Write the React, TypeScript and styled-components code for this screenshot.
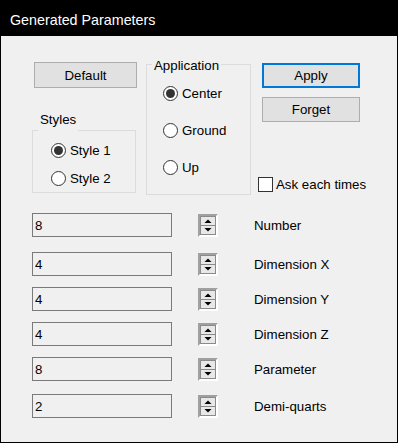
import React from 'react';
import styled, { createGlobalStyle } from 'styled-components';

const GlobalStyle = createGlobalStyle`
  html, body {
    margin: 0;
    padding: 0;
    background: #f0f0f0;
  }
  * {
    box-sizing: border-box;
  }
`;

const Window = styled.div`
  width: 398px;
  height: 443px;
  display: flex;
  flex-direction: column;
  font-family: "Liberation Sans", Arial, sans-serif;
  font-size: 13.3px;
  color: #000;
  overflow: hidden;
`;

const TitleBar = styled.div`
  height: 36px;
  flex: none;
  background: #000;
  color: #fff;
  font-size: 14.3px;
  line-height: 40px;
  padding-left: 10px;
  overflow: hidden;
`;

const Body = styled.div`
  flex: 1;
  background: #f0f0f0;
  border: 1px solid #000;
  border-top: none;
  padding-left: 31px;
`;

const TopArea = styled.div`
  display: flex;
  align-items: flex-start;
  height: 158px;
`;

const Column = styled.div<{ $w: number; $ml?: number }>`
  width: ${p => p.$w}px;
  margin-left: ${p => p.$ml ?? 0}px;
  display: flex;
  flex-direction: column;
`;

const Button = styled.button<{ $primary?: boolean; $mt: number }>`
  width: 98px;
  height: 25px;
  margin-top: ${p => p.$mt}px;
  margin-left: 4px;
  padding: 0;
  background: #e1e1e1;
  border: ${p => (p.$primary ? '2px solid #0078d7' : '1px solid #adadad')};
  font-family: inherit;
  font-size: 13.3px;
  font-weight: normal;
  color: #000;
`;

const WideButton = styled(Button)`
  width: 103px;
  height: 26px;
  margin-left: 2px;
`;

const Group = styled.div<{ $w: number; $h: number; $mt: number; $pt: number; $pl: number; $gap: number }>`
  position: relative;
  width: ${p => p.$w}px;
  height: ${p => p.$h}px;
  margin-top: ${p => p.$mt}px;
  border: 1px solid #dcdcdc;
  padding: ${p => p.$pt}px 0 0 ${p => p.$pl}px;
  display: flex;
  flex-direction: column;
  gap: ${p => p.$gap}px;
`;

const Legend = styled.span<{ $top: number; $left: number }>`
  position: absolute;
  top: ${p => p.$top}px;
  left: ${p => p.$left}px;
  padding: 0 2px 6px;
  line-height: 15px;
  background: #f0f0f0;
`;

const OptionRow = styled.label`
  display: flex;
  align-items: center;
  gap: 4px;
  height: 15px;
  line-height: 15px;
`;

const RadioCircle = styled.span<{ $checked?: boolean }>`
  width: 15px;
  height: 15px;
  flex: none;
  border: 1px solid #333;
  border-radius: 50%;
  background: #fff;
  display: flex;
  align-items: center;
  justify-content: center;

  &::after {
    content: '';
    width: 9px;
    height: 9px;
    border-radius: 50%;
    background: ${p => (p.$checked ? '#333' : 'transparent')};
  }
`;

const CheckRow = styled(OptionRow)`
  margin-top: 55px;
  gap: 3px;
  white-space: nowrap;
`;

const CheckBox = styled.span`
  width: 15px;
  height: 15px;
  flex: none;
  border: 1px solid #333;
  background: #fff;
`;

const Rows = styled.div`
  display: flex;
  flex-direction: column;
`;

const FieldRow = styled.div<{ $mt: number }>`
  display: flex;
  align-items: center;
  height: 24px;
  margin-top: ${p => p.$mt}px;
`;

const ValueBox = styled.input`
  width: 140px;
  height: 24px;
  border: 1px solid #7a7a7a;
  background: #f0f0f0;
  padding: 0 0 0 2px;
  margin: 0;
  font-family: inherit;
  font-size: 13.3px;
  color: #000;
  outline: none;
`;

const Spinner = styled.span`
  width: 20px;
  height: 23px;
  margin: 1px 0 0 26px;
  border-top: 2px solid #a0a0a0;
  border-left: 2px solid #a0a0a0;
  border-right: 2px solid #fff;
  border-bottom: 2px solid #fff;
  display: flex;
`;

const FieldLabel = styled.span`
  margin-left: 36px;
  white-space: nowrap;
`;

const SpinArrows = () => (
  <svg width="16" height="19" viewBox="0 0 16 19">
    <rect x="0.5" y="0.5" width="15" height="18" fill="#e8e8e8" stroke="#8a8a8a" />
    <line x1="1" y1="9.5" x2="15" y2="9.5" stroke="#8a8a8a" />
    <polygon points="4.5,7 11.5,7 8,3.5" fill="#000" />
    <polygon points="4.5,12 11.5,12 8,15.5" fill="#000" />
  </svg>
);

const fields = [
  { value: '8', label: 'Number', mt: 19 },
  { value: '4', label: 'Dimension X', mt: 15 },
  { value: '4', label: 'Dimension Y', mt: 11 },
  { value: '4', label: 'Dimension Z', mt: 11 },
  { value: '8', label: 'Parameter', mt: 11 },
  { value: '2', label: 'Demi-quarts', mt: 13 },
];

export default function App() {
  return (
    <>
      <GlobalStyle />
      <Window>
        <TitleBar>Generated Parameters</TitleBar>
        <Body>
          <TopArea>
            <Column $w={105}>
              <WideButton $mt={26}>Default</WideButton>
              <Group $w={104} $h={63} $mt={42} $pt={12} $pl={18} $gap={13}>
                <Legend $top={-19} $left={5}>Styles</Legend>
                <OptionRow><RadioCircle $checked />Style 1</OptionRow>
                <OptionRow><RadioCircle />Style 2</OptionRow>
              </Group>
            </Column>
            <Column $w={105} $ml={9}>
              <Group $w={105} $h={131} $mt={28} $pt={21} $pl={16} $gap={22}>
                <Legend $top={-7} $left={5}>Application</Legend>
                <OptionRow><RadioCircle $checked />Center</OptionRow>
                <OptionRow><RadioCircle />Ground</OptionRow>
                <OptionRow><RadioCircle />Up</OptionRow>
              </Group>
            </Column>
            <Column $w={110} $ml={7}>
              <Button $primary $mt={27}>Apply</Button>
              <Button $mt={9}>Forget</Button>
              <CheckRow><CheckBox />Ask each times</CheckRow>
            </Column>
          </TopArea>
          <Rows>
            {fields.map(f => (
              <FieldRow key={f.label} $mt={f.mt}>
                <ValueBox readOnly defaultValue={f.value} />
                <Spinner><SpinArrows /></Spinner>
                <FieldLabel>{f.label}</FieldLabel>
              </FieldRow>
            ))}
          </Rows>
        </Body>
      </Window>
    </>
  );
}
